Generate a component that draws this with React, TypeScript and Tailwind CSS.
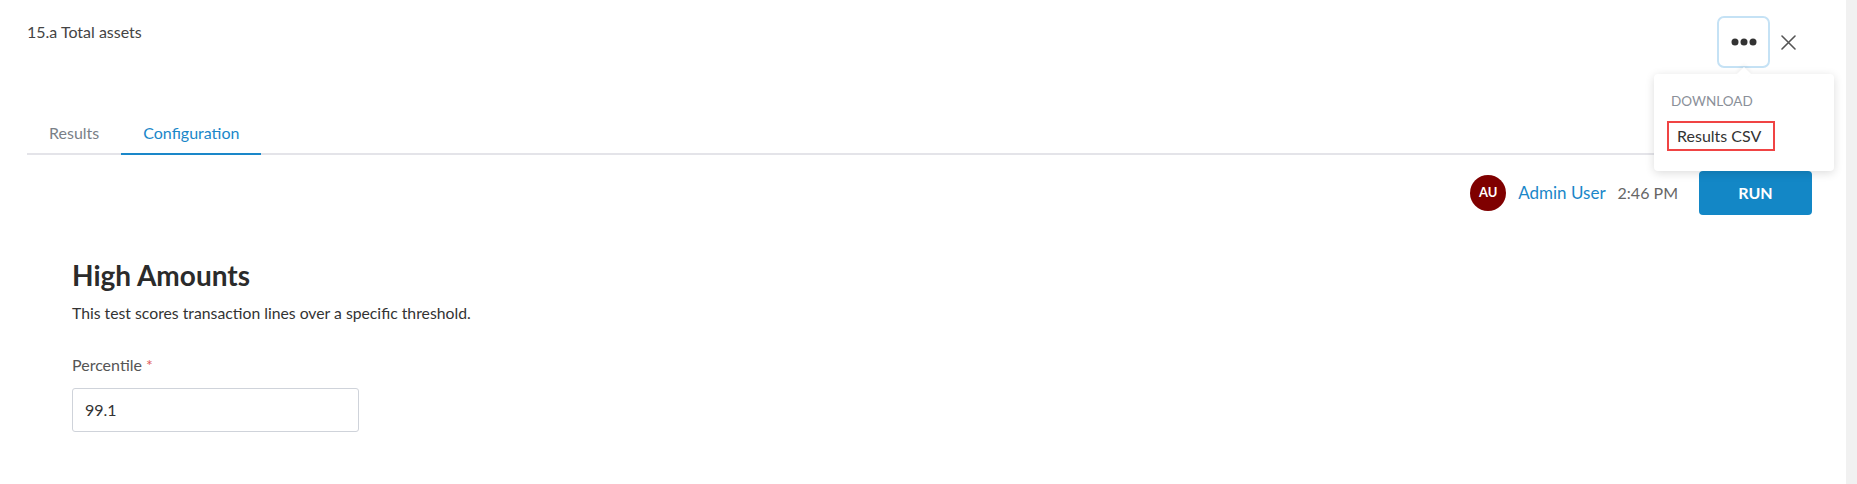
import React from "react";

const font = { fontFamily: "Lato, 'Open Sans', sans-serif" };

const DotsIcon: React.FC = () => (
  <svg width="26" height="8" viewBox="0 0 26 8" fill="#333">
    <circle cx="4" cy="4" r="3.5" />
    <circle cx="13" cy="4" r="3.5" />
    <circle cx="22" cy="4" r="3.5" />
  </svg>
);

const CloseIcon: React.FC = () => (
  <svg width="15" height="15" viewBox="0 0 15 15" fill="none">
    <path d="M1 1 L14 14 M14 1 L1 14" stroke="#555" strokeWidth="1.6" strokeLinecap="round" />
  </svg>
);

export default function App() {
  return (
    <div className="flex h-[484px] w-full bg-white text-[#333]" style={font}>
      <div className="relative w-[1846px] shrink-0">
        {/* header */}
        <div className="flex items-start justify-between pl-[27px] pr-[50px]">
          <div className="pt-[22px] text-[16px] leading-[20px] text-[#444]">15.a Total assets</div>
          <div className="flex items-center gap-[11px] pt-[16px]">
            <button className="flex h-[52px] w-[53px] items-center justify-center rounded-[7px] border-2 border-[#c5e2f5] bg-white">
              <DotsIcon />
            </button>
            <CloseIcon />
          </div>
        </div>

        {/* tabs */}
        <div className="mx-[27px] mt-[43px] flex border-b-2 border-[#e4e4e9] text-[16px] leading-[20px]">
          <div className="-mb-[2px] border-b-2 border-transparent px-[22px] pt-[12px] pb-[10px] text-[#7a7f87]">Results</div>
          <div className="-mb-[2px] border-b-2 border-[#1a87c9] px-[22px] pt-[12px] pb-[10px] text-[#1a87c9]">Configuration</div>
        </div>

        {/* run row */}
        <div className="mt-[16px] flex items-center justify-end pr-[34px]">
          <div className="flex h-[36px] w-[36px] items-center justify-center rounded-full bg-[#7f0000] text-[13px] font-bold text-white">
            AU
          </div>
          <span className="ml-[12px] text-[17px] text-[#1a87c9]">Admin User</span>
          <span className="ml-[12px] text-[16px] text-[#666]">2:46 PM</span>
          <button className="ml-[21px] h-[44px] w-[113px] rounded-[4px] bg-[#1387c6] text-[16px] font-bold text-white">
            RUN
          </button>
        </div>

        {/* form */}
        <div className="mt-[43px] pl-[72px]">
          <h1 className="text-[28px] leading-[34px] font-bold text-[#2b2b2b]">High Amounts</h1>
          <p className="mt-[11px] text-[15.75px] leading-[20px] text-[#333]">
            This test scores transaction lines over a specific threshold.
          </p>
          <div className="mt-[32px] text-[16px] leading-[20px] text-[#555]">
            Percentile <span className="text-[#e05a5a]">*</span>
          </div>
          <div className="mt-[13px] flex h-[44px] w-[287px] items-center rounded-[3px] border border-[#cfd3da] px-[12px] text-[16px] text-[#333]">
            99.1
          </div>
        </div>

        {/* dropdown menu */}
        <div className="absolute left-[1654px] top-[74px] w-[180px] rounded-[4px] bg-white pt-[17px] pb-[20px] pl-[13px] shadow-[0_2px_10px_rgba(0,0,0,0.14)]">
          <div className="absolute -top-[5px] left-[85px] h-[10px] w-[10px] rotate-45 bg-white shadow-[-2px_-2px_4px_rgba(0,0,0,0.05)]" />
          <div className="relative pl-[4px] text-[13.5px] leading-[20px] text-[#8a9099]">DOWNLOAD</div>
          <div className="relative mt-[10px] w-[108px] border-2 border-[#f04444] px-[8px] py-[3px] text-[16px] leading-[20px] text-[#333]">
            Results CSV
          </div>
        </div>
      </div>
      <div className="w-[11px] bg-[#f1f1f1]" />
    </div>
  );
}
